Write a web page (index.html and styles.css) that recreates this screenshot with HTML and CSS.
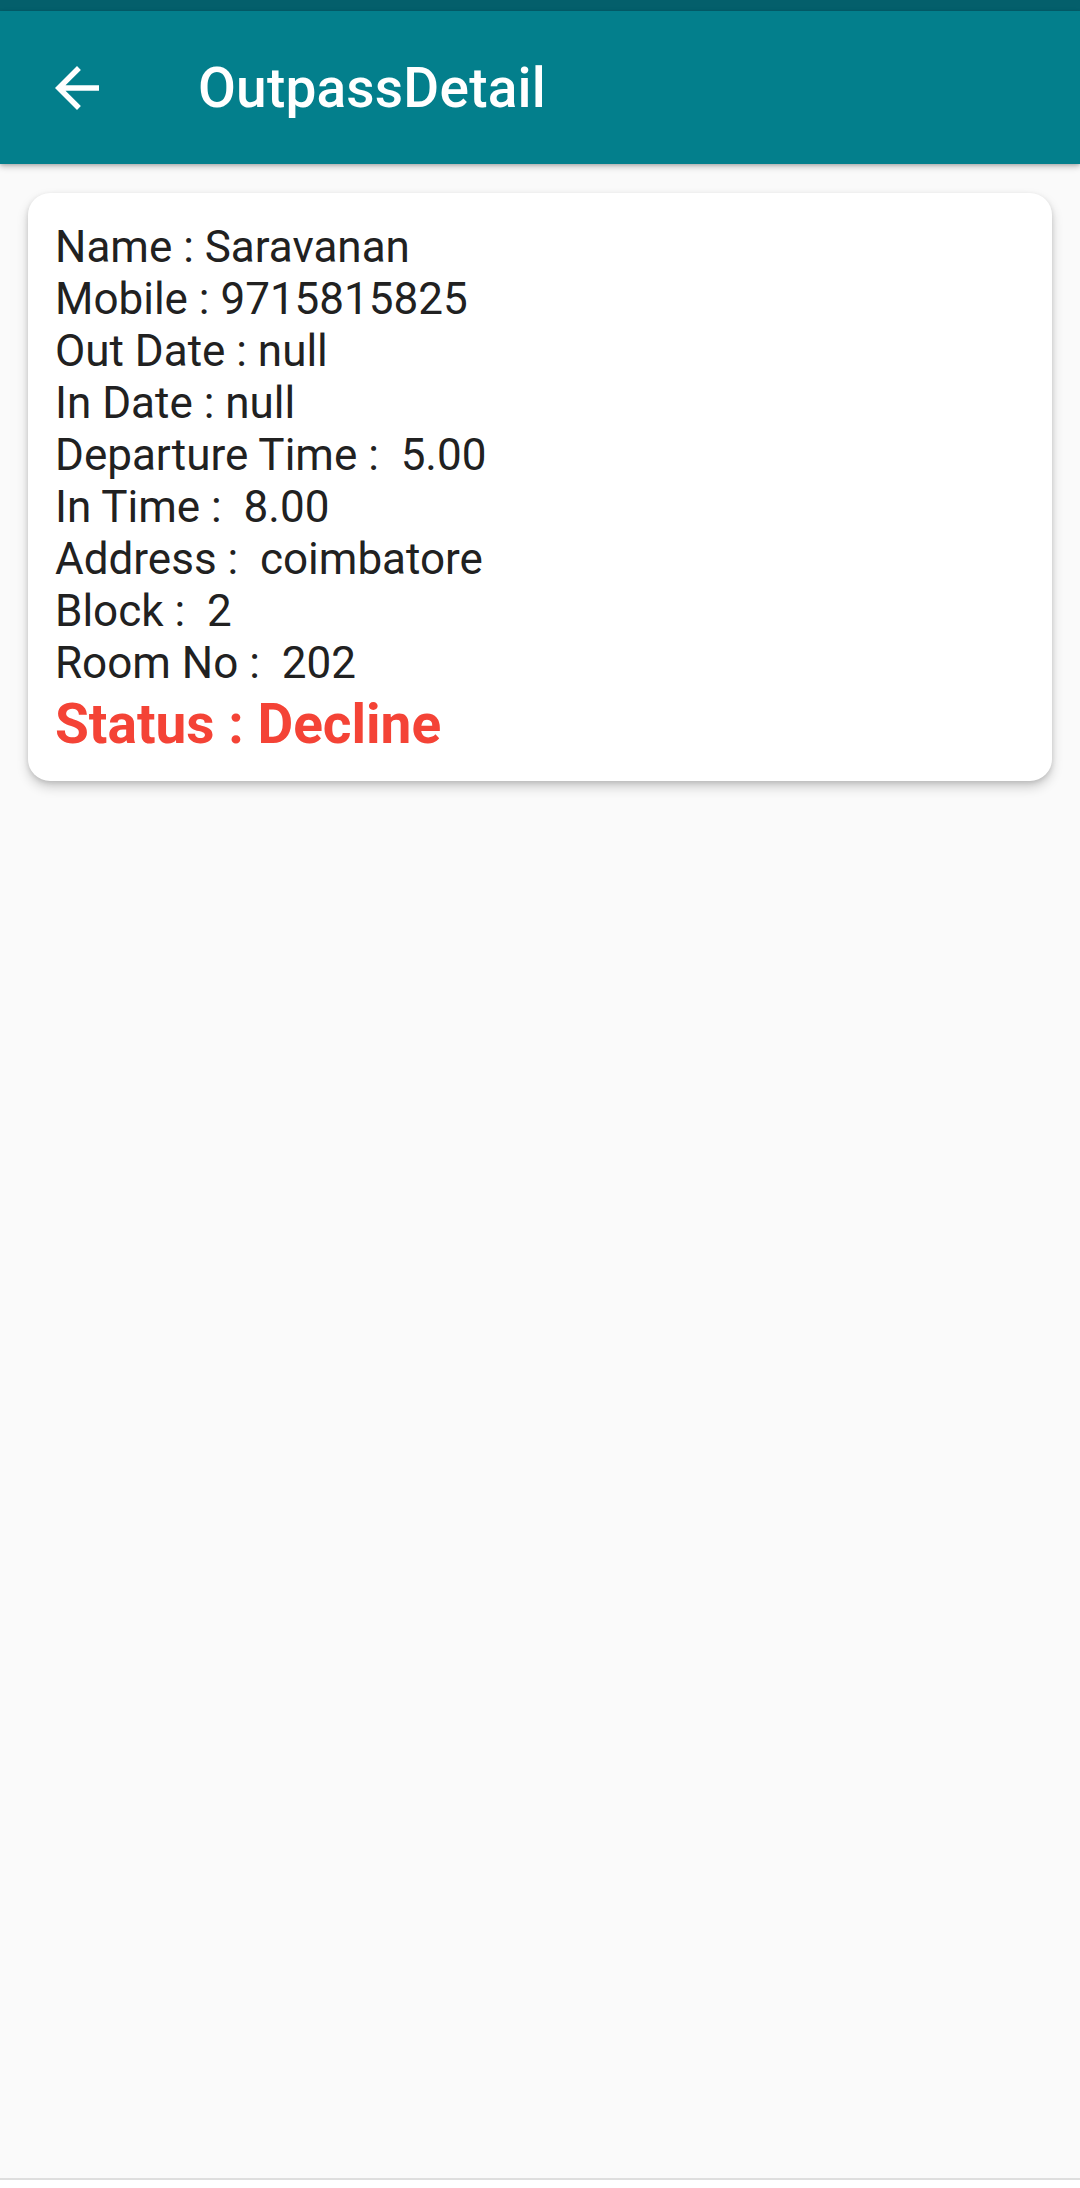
FILE: index.html
```html
<!DOCTYPE html>
<html>
<head>
<meta charset="utf-8">
<link rel="stylesheet" href="styles.css">
</head>
<body>
<div class="screen">
  <div class="statusbar"></div>
  <header class="appbar">
    <div class="leading">
      <svg class="back" viewBox="0 0 24 24" width="66" height="66"><path d="M20 11H7.83l5.59-5.59L12 4l-8 8 8 8 1.41-1.41L7.83 13H20v-2z" fill="#ffffff"/></svg>
    </div>
    <div class="title">OutpassDetail</div>
  </header>
  <main class="content">
    <section class="card">
      <div class="line">Name : Saravanan</div>
      <div class="line">Mobile : 9715815825</div>
      <div class="line">Out Date : null</div>
      <div class="line">In Date : null</div>
      <div class="line">Departure Time :&nbsp; 5.00</div>
      <div class="line">In Time :&nbsp; 8.00</div>
      <div class="line">Address :&nbsp; coimbatore</div>
      <div class="line">Block :&nbsp; 2</div>
      <div class="line">Room No :&nbsp; 202</div>
      <div class="status">Status : Decline</div>
    </section>
  </main>
  <div class="navbar"></div>
</div>
</body>
</html>
```

FILE: styles.css
```css
* { box-sizing: border-box; }
html, body { margin: 0; padding: 0; }
body {
  width: 1080px;
  height: 2188px;
  font-family: Roboto, "Noto Sans", "Liberation Sans", sans-serif;
  background: #fafafa;
  overflow: hidden;
}
.screen {
  display: flex;
  flex-direction: column;
  height: 2188px;
}
.statusbar {
  height: 11px;
  background: #045f6b;
  flex: none;
}
.appbar {
  height: 153px;
  flex: none;
  background: #037f8c;
  display: flex;
  align-items: center;
  box-shadow: 0 3px 6px rgba(0,0,0,0.22), 0 1px 3px rgba(0,0,0,0.14);
  position: relative;
  z-index: 2;
}
.leading {
  width: 154px;
  height: 153px;
  display: flex;
  align-items: center;
  justify-content: center;
  flex: none;
}
.back { display: block; }
.title {
  margin-left: 44px;
  color: #ffffff;
  font-size: 55px;
  font-weight: 500;
  letter-spacing: 0.2px;
}
.content {
  flex: 1;
  padding: 29px 28px 0;
  background: #fafafa;
}
.card {
  background: #ffffff;
  border-radius: 22px;
  padding: 28px 27px 22px;
  box-shadow: 0 6px 12px rgba(0,0,0,0.18), 0 2px 5px rgba(0,0,0,0.12);
}
.line {
  font-size: 44px;
  line-height: 52px;
  color: #212121;
  white-space: pre;
}
.status {
  font-size: 55px;
  line-height: 70px;
  font-weight: 700;
  color: #f44336;
}
.navbar {
  height: 10px;
  flex: none;
  background: #ffffff;
  border-top: 2px solid #dedede;
}
```
